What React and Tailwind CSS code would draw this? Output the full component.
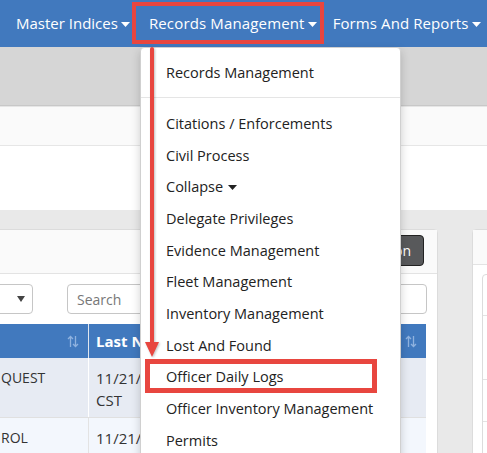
import React from "react";

function Caret({ className }) {
  return (
    <svg className={className} width="9" height="5" viewBox="0 0 9 5">
      <path d="M0 0 L9 0 L4.5 5 Z" fill="currentColor" />
    </svg>
  );
}

function SortIcon({ className }) {
  return (
    <svg className={className} width="12" height="13" viewBox="0 0 12 13" fill="none" stroke="currentColor" strokeWidth="1.3">
      <path d="M3.5 12 V1.5 M1 4 L3.5 1.5 L6 4" />
      <path d="M8.5 1 V11.5 M6 9 L8.5 11.5 L11 9" />
    </svg>
  );
}

const items = [
  "Citations / Enforcements",
  "Civil Process",
  "Collapse",
  "Delegate Privileges",
  "Evidence Management",
  "Fleet Management",
  "Inventory Management",
  "Lost And Found",
  "Officer Daily Logs",
  "Officer Inventory Management",
  "Permits",
];

export default function App() {
  return (
    <div className="relative w-[487px] h-[453px] overflow-hidden bg-[#e9e9e9] font-['Open_Sans',sans-serif] text-[#333]">
      {/* nav */}
      <nav className="h-[47px] bg-[#4179be] flex items-center text-white text-[15px] whitespace-nowrap">
        <div className="flex items-center gap-[3px] pl-[16px] pr-[10px]">
          <span>Master Indices</span>
          <Caret className="mt-[1px]" />
        </div>
        <div className="flex items-center gap-[3px] pl-[9px] pr-[8px]">
          <span className="tracking-[0.15px]">Records Management</span>
          <Caret className="mt-[1px]" />
        </div>
        <div className="flex items-center gap-[4px] pl-[8px]">
          <span className="tracking-[0.1px]">Forms And Reports</span>
          <Caret className="mt-[1px]" />
        </div>
      </nav>
      <div className="h-[59px] bg-[#d6d6d6] border-b border-[#c8c8c8]" />
      <div className="h-[40px] bg-[#fafafa] border-t border-[#e6e6e6] border-b border-[#d9d9d9]" />
      <div className="h-[64px] bg-white" />

      {/* cards */}
      <div className="flex pt-[19px] gap-[34px]">
        <div className="ml-[-20px] w-[458px] shrink-0 h-[260px] bg-white border border-[#dcdcdc] rounded-[4px]">
          <div className="h-[44px] bg-[#fafafa] border-b border-[#e3e3e3] flex items-start justify-end pr-[13px] pt-[5px]">
            <div className="h-[31px] px-[12px] bg-[#58595b] border border-[#222] rounded-[4px] text-white text-[14px] flex items-center">
              Add Action
            </div>
          </div>
          <div className="px-[10px] pt-[10px]">
            <div className="flex gap-[34px]">
              <div className="w-[42px] h-[30px] border border-[#c6c6c6] rounded-[4px] flex items-center justify-end pr-[7px] text-[#444]">
                <svg width="8" height="6" viewBox="0 0 8 6"><path d="M0 0 L8 0 L4 6 Z" fill="currentColor" /></svg>
              </div>
              <div className="flex-1 h-[30px] border border-[#c6c6c6] rounded-[4px] flex items-center pl-[9px] text-[14px] text-[#777]">
                Search
              </div>
            </div>
            <div className="mt-[10px] mr-[1px]">
              <div className="grid grid-cols-[98px_180px_1fr] h-[34px] bg-[#4179be] text-white text-[15px] font-bold">
                <div className="flex items-center justify-end pr-[9px] border-r border-[#e0e6ef] text-[#8fb2df]">
                  <SortIcon />
                </div>
                <div className="flex items-center pl-[7px] border-r border-[#e0e6ef]">Last Notified</div>
                <div className="flex items-center justify-end pr-[9px] text-[#8fb2df]">
                  <SortIcon />
                </div>
              </div>
              <div className="grid grid-cols-[98px_180px_1fr] h-[59px] bg-[#e7ebf3] text-[14px] leading-[22px]">
                <div className="pl-[10px] pt-[9px] border-r border-[#fff]">QUEST</div>
                <div className="pl-[7px] pt-[9px] border-r border-[#fff] text-[15px]">11/21/2023<br />CST</div>
                <div />
              </div>
              <div className="grid grid-cols-[98px_180px_1fr] h-[40px] bg-[#f3f7fd] text-[14px] leading-[22px] border-t border-[#e0e0e0]">
                <div className="pl-[10px] pt-[9px] border-r border-[#e3e3e3]">ROL</div>
                <div className="pl-[7px] pt-[9px] border-r border-[#e3e3e3] text-[15px]">11/21/2023</div>
                <div />
              </div>
            </div>
          </div>
        </div>
        <div className="w-[60px] shrink-0 h-[260px] bg-white border border-[#dcdcdc] rounded-[4px]">
          <div className="h-[35px] bg-[#fafafa] border-b border-[#e3e3e3]" />
          <div className="ml-[9px] mt-[9px] h-[200px] border border-[#dcdcdc] rounded-[4px] flex flex-col">
            <div className="h-[41px] border-b border-[#e3e3e3]" />
            <div className="h-[64px] border-b border-[#e3e3e3]" />
            <div className="h-[42px] border-b border-[#e3e3e3]" />
          </div>
        </div>
      </div>

      {/* dropdown menu */}
      <div className="absolute left-[140px] top-[47px] w-[261px] h-[420px] bg-white border border-[#d0d0d0] rounded-[4px] shadow-[0_4px_10px_rgba(0,0,0,0.18)] text-[14.5px] text-[#222] whitespace-nowrap">
        <div className="pt-[9px]">
          <div className="h-[32px] flex items-center pl-[25px]">Records Management</div>
        </div>
        <div className="mt-[8px] h-px bg-[#e5e5e5]" />
        <div className="pt-[10px]">
          {items.map((t) => (
            <div key={t} className="h-[31.7px] flex items-center pl-[25px]">
              {t}
              {t === "Collapse" && <Caret className="ml-[5px] text-[#222]" />}
            </div>
          ))}
        </div>
      </div>

      {/* annotations */}
      <div className="absolute left-[132px] top-[2px] w-[192px] h-[42px] border-[4px] border-[#e8463f]" />
      <div className="absolute left-[145px] top-[359px] w-[232px] h-[34px] border-[5px] border-[#e8463f]" />
      <svg className="absolute left-[140px] top-[44px]" width="30" height="320" viewBox="0 0 30 320" style={{ filter: "drop-shadow(1px 1px 1px rgba(0,0,0,0.25))" }}>
        <path d="M12 5 V300" stroke="#e8463f" strokeWidth="4" strokeLinecap="round" />
        <path d="M5 298 L19 298 L12 313 Z" fill="#e8463f" />
      </svg>
    </div>
  );
}
